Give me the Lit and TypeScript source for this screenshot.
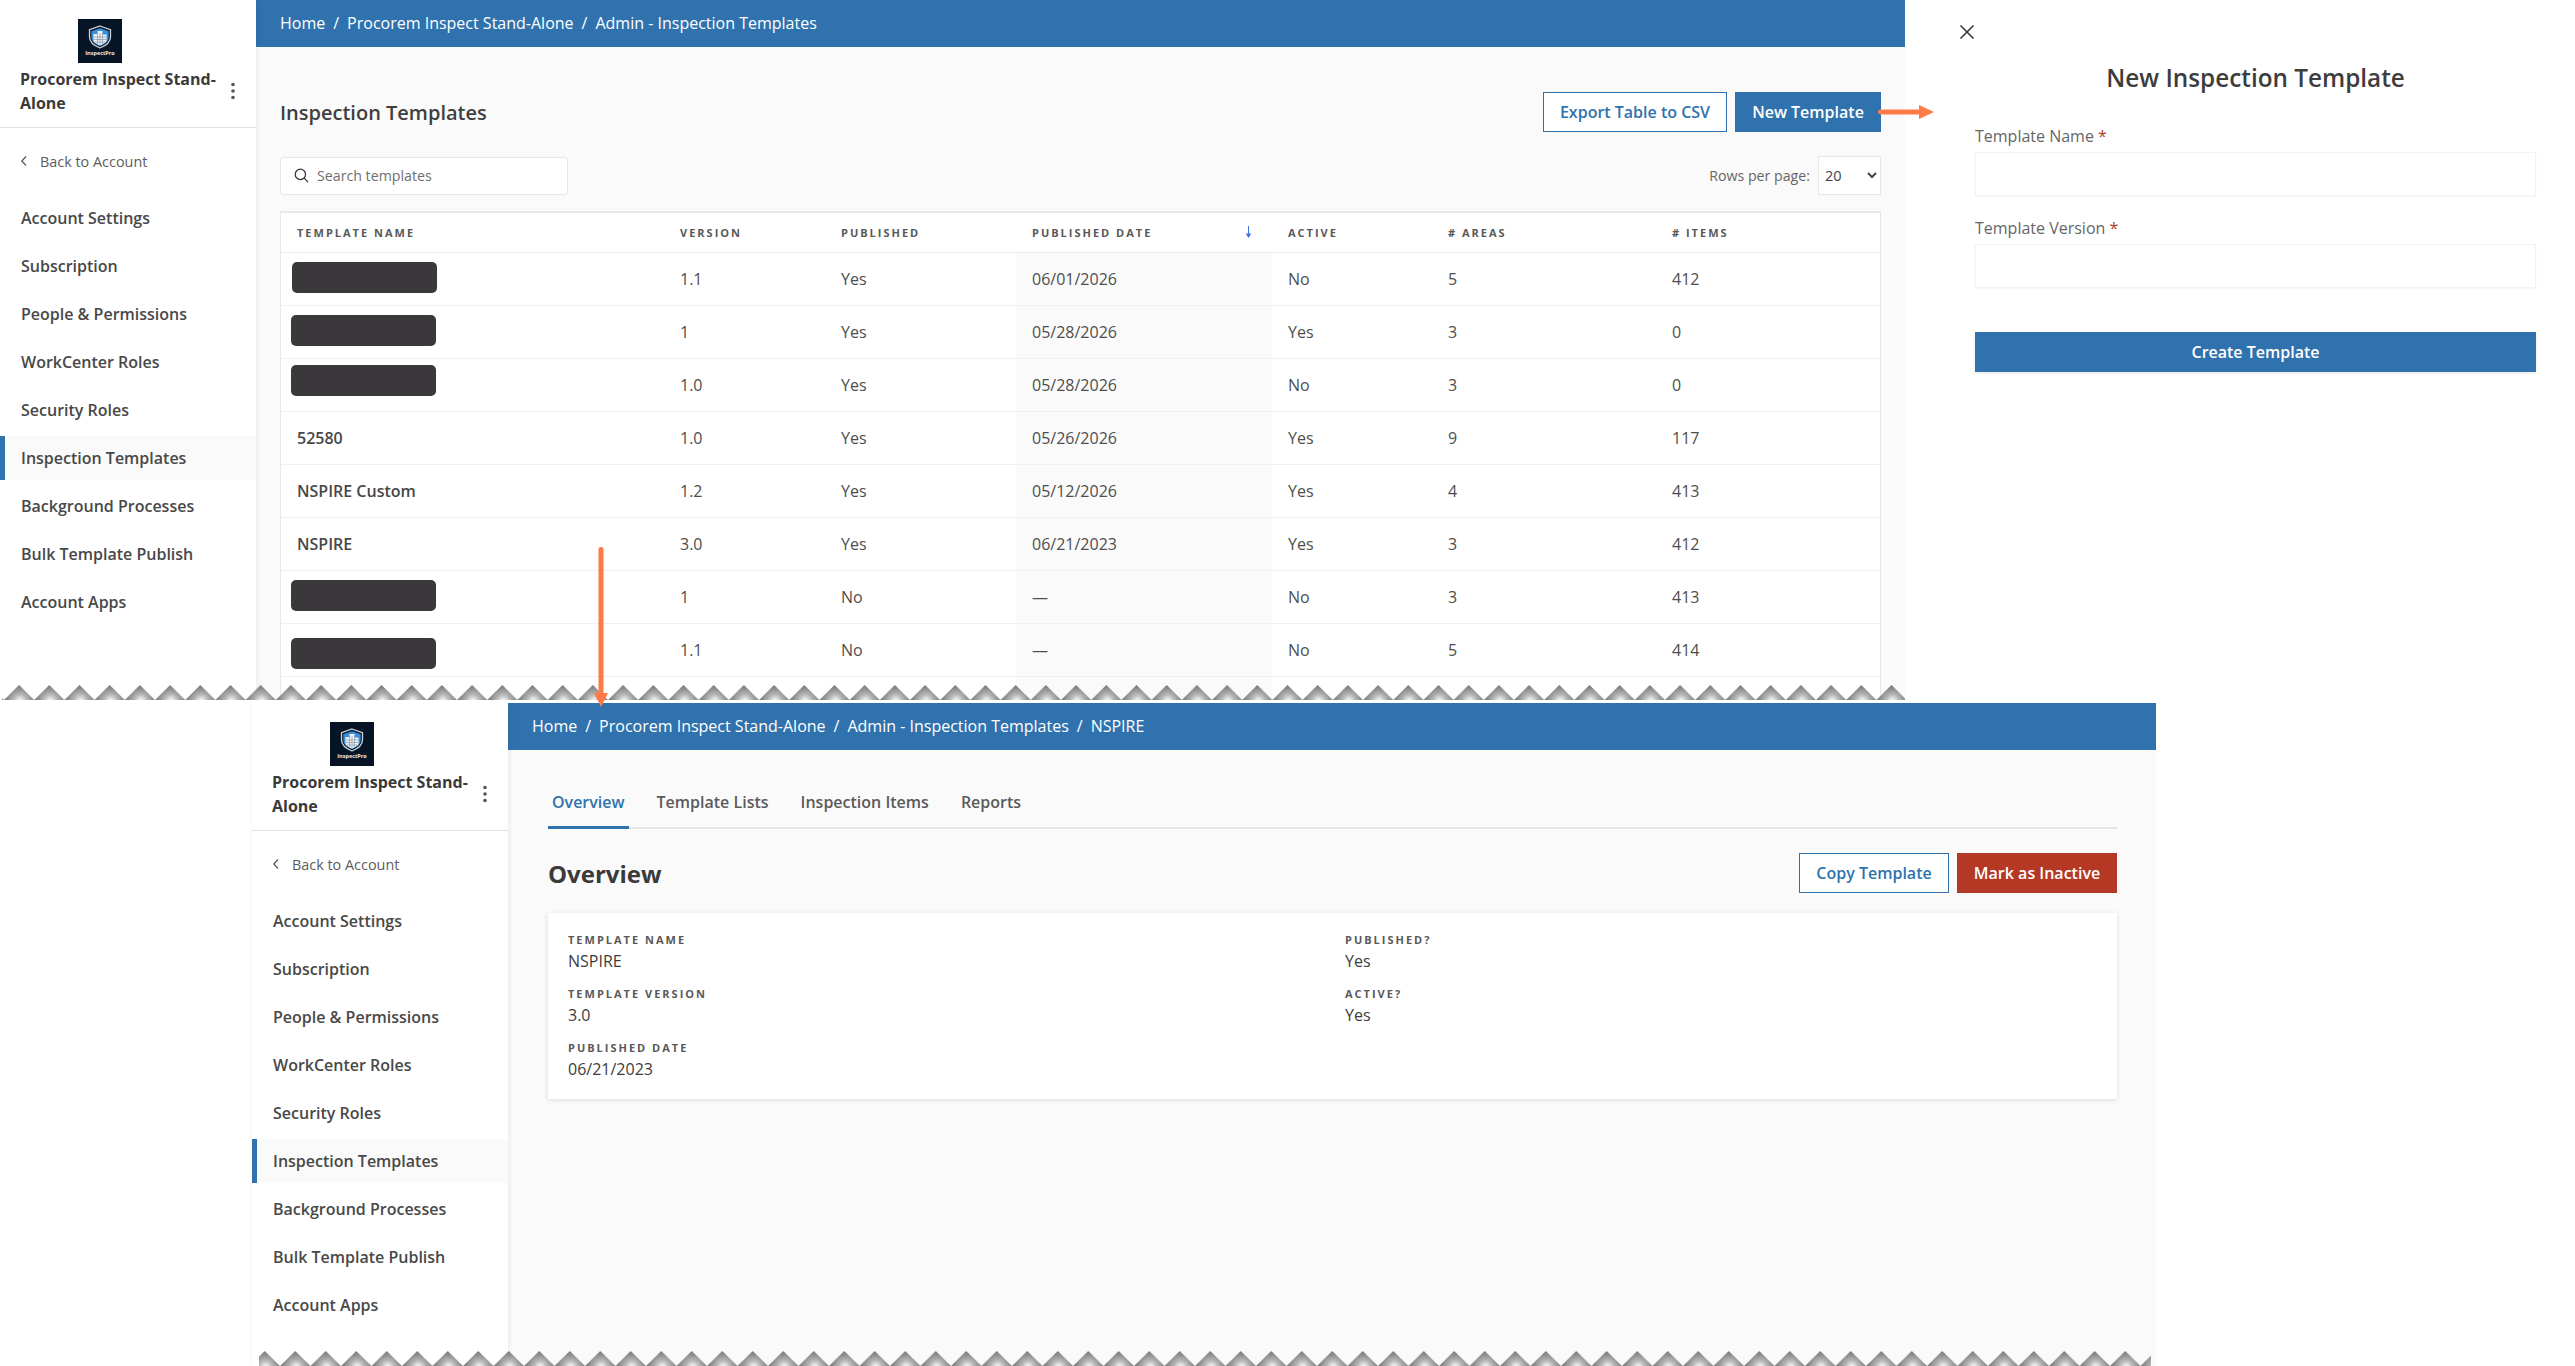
import { LitElement, css, html, svg } from 'lit';
import { customElement, property } from 'lit/decorators.js';

const NAV = [
  'Account Settings',
  'Subscription',
  'People & Permissions',
  'WorkCenter Roles',
  'Security Roles',
  'Inspection Templates',
  'Background Processes',
  'Bulk Template Publish',
  'Account Apps',
];

const COLUMNS = ['Template Name', 'Version', 'Published', 'Published Date', 'Active', '# Areas', '# Items'];

interface TemplateRow {
  name: string;
  // redaction box offset inside the row, null when the name is readable
  mask?: [number, number];
  cells: string[];
}

const ROWS: TemplateRow[] = [
  { name: '', mask: [11, 9], cells: ['1.1', 'Yes', '06/01/2026', 'No', '5', '412'] },
  { name: '', mask: [10, 9], cells: ['1', 'Yes', '05/28/2026', 'Yes', '3', '0'] },
  { name: '', mask: [10, 6], cells: ['1.0', 'Yes', '05/28/2026', 'No', '3', '0'] },
  { name: '52580', cells: ['1.0', 'Yes', '05/26/2026', 'Yes', '9', '117'] },
  { name: 'NSPIRE Custom', cells: ['1.2', 'Yes', '05/12/2026', 'Yes', '4', '413'] },
  { name: 'NSPIRE', cells: ['3.0', 'Yes', '06/21/2023', 'Yes', '3', '412'] },
  { name: '', mask: [10, 9], cells: ['1', 'No', '—', 'No', '3', '413'] },
  { name: '', mask: [10, 14], cells: ['1.1', 'No', '—', 'No', '5', '414'] },
  { name: '', cells: ['', '', '', '', '', ''] },
];

@customElement('app-sidebar')
export class AppSidebar extends LitElement {
  render() {
    return html`
      <div class="head">
        <svg class="logo" viewBox="0 0 44 44" width="44" height="44">
          <rect width="44" height="44" fill="#061426"></rect>
          <path d="M22 7l10.500 3.600V18c0 5.600-4.500 8.600-10.500 11-6-2.400-10.500-5.400-10.500-11v-7.400z" fill="#0c2035" stroke="#ccd3da" stroke-width="1.300"></path>
          <path d="M22 9.300l8.600 3V18c0 4.500-3.600 7-8.600 9-5-2-8.600-4.500-8.600-9v-5.700z" fill="#3c8edb"></path>
          <path d="M15.500 15h4v-3h5v3.500h4V22c-1.500 2-3.700 3.300-6.500 4.400-2.800-1.100-5-2.400-6.500-4.400z" fill="#eef1f4"></path>
          <path d="M19.500 14v11M22 14v12M24.500 14v11M16 18h12M16 20.500h12M17 23h10" stroke="#8a96a3" stroke-width=".7" fill="none"></path>
          <text x="22" y="36" text-anchor="middle" class="logo-text">InspectPro</text>
        </svg>
        <div class="title-row">
          <div class="title">Procorem Inspect Stand-Alone</div>
          <svg class="dots" viewBox="0 0 4 18" width="4" height="18">
            <circle cx="2" cy="2.500" r="1.800"></circle>
            <circle cx="2" cy="9" r="1.800"></circle>
            <circle cx="2" cy="15.500" r="1.800"></circle>
          </svg>
        </div>
      </div>
      <div class="back">
        <svg viewBox="0 0 8 12" width="8" height="12"><path d="M6 1.500L1.800 6 6 10.500" fill="none" stroke="#555" stroke-width="1.200"></path></svg>
        Back to Account
      </div>
      <nav>
        ${NAV.map(
          (item) => html`<div class="item ${item === 'Inspection Templates' ? 'active' : ''}">${item}</div>`,
        )}
      </nav>
    `;
  }

  static styles = css`
    :host {
      display: block;
      flex: 0 0 256px;
      width: 256px;
      background: #fff;
      box-shadow: 1px 0 6px rgba(0, 0, 0, 0.07);
      position: relative;
      z-index: 1;
      font-family: 'Open Sans', sans-serif;
      color: #484848;
    }
    .head {
      padding: 19px 0 12px;
      border-bottom: 1px solid #e3e3e3;
    }
    .logo {
      display: block;
      margin-left: 78px;
    }
    .logo-text {
      font: 700 5.500px 'Open Sans', sans-serif;
      fill: #e8ecf0;
    }
    .title-row {
      display: flex;
      align-items: center;
      margin-top: 4px;
      padding-left: 20px;
    }
    .title {
      width: 204px;
      font-size: 16px;
      font-weight: 700;
      line-height: 24px;
      color: #3a3a3a;
    }
    .dots {
      margin-left: 7px;
      fill: #555;
    }
    .back {
      display: flex;
      align-items: center;
      gap: 12px;
      height: 20px;
      margin: 23px 0 25px 20px;
      font-size: 14.400px;
      color: #5c5c5c;
    }
    nav {
      display: flex;
      flex-direction: column;
      gap: 4px;
    }
    .item {
      display: flex;
      align-items: center;
      height: 44px;
      padding-left: 16px;
      border-left: 5px solid transparent;
      font-size: 16px;
      font-weight: 600;
    }
    .item.active {
      border-left-color: #3072ad;
      background: #fafafa;
    }
  `;
}

@customElement('bread-crumbs')
export class BreadCrumbs extends LitElement {
  @property({ type: Array }) items: string[] = [];

  render() {
    return html`${this.items.map(
      (item, i) => html`${i > 0 ? html`<span class="sep">/</span>` : null}<span>${item}</span>`,
    )}`;
  }

  static styles = css`
    :host {
      display: flex;
      align-items: center;
      flex: 0 0 47px;
      height: 47px;
      padding: 0 0 2px 24px;
      box-sizing: border-box;
      background: #3072ad;
      color: #fff;
      font-family: 'Open Sans', sans-serif;
      font-size: 16px;
      white-space: nowrap;
    }
    .sep {
      margin: 0 8px;
    }
  `;
}

@customElement('torn-edge')
export class TornEdge extends LitElement {
  @property({ type: Number }) period = 30.2;
  @property({ type: Number }) offset = 2;

  render() {
    const p = this.period;
    return html`<svg width="100%" height="15">
      <defs>
        ${svg`<radialGradient id="fade" gradientUnits="userSpaceOnUse" cx="${p / 2 + 1}" cy="16" r="15">
          <stop offset="0" stop-color="#fff"></stop>
          <stop offset=".45" stop-color="#b5b5b5"></stop>
          <stop offset="1" stop-color="#7a7a7a"></stop>
        </radialGradient>
        <pattern id="teeth" patternUnits="userSpaceOnUse" x="${this.offset}" y="0" width="${p}" height="15">
          <path d="M0 15L${p / 2} 0L${p} 15z" fill="url(#fade)"></path>
        </pattern>`}
      </defs>
      <rect width="100%" height="15" fill="url(#teeth)"></rect>
    </svg>`;
  }

  static styles = css`
    :host {
      display: block;
      height: 15px;
      line-height: 0;
    }
    svg {
      display: block;
    }
  `;
}

@customElement('app-root')
export class AppRoot extends LitElement {
  private renderList() {
    return html`
      <main class="list">
        <bread-crumbs .items=${['Home', 'Procorem Inspect Stand-Alone', 'Admin - Inspection Templates']}></bread-crumbs>
        <div class="list-body">
          <div class="list-top">
            <h1>Inspection Templates</h1>
            <div class="actions">
              <button class="btn ghost export">Export Table to CSV</button>
              <button class="btn solid new">New Template</button>
            </div>
          </div>
          <div class="filters">
            <label class="search">
              <svg viewBox="0 0 16 16" width="15" height="15">
                <circle cx="6.800" cy="6.800" r="5.500" fill="none" stroke="#333" stroke-width="1.300"></circle>
                <path d="M10.800 10.800L15 15" stroke="#333" stroke-width="1.300"></path>
              </svg>
              <input placeholder="Search templates" />
            </label>
            <div class="rows-per">
              <span>Rows per page:</span>
              <select><option>20</option></select>
            </div>
          </div>
          <div class="table">
            <div class="row header">
              ${COLUMNS.map(
                (c) => html`<div class="cell">
                  <span>${c}</span>
                  ${c === 'Published Date'
                    ? html`<svg class="sort" viewBox="0 0 7 12" width="7" height="12">
                        <path d="M3.500 0v8" stroke="#3d6fe0" stroke-width="1"></path>
                        <path d="M.8 7.500h5.400L3.500 12z" fill="#3d6fe0"></path>
                      </svg>`
                    : null}
                </div>`,
              )}
            </div>
            ${ROWS.map(
              (r) => html`<div class="row">
                <div class="cell name">${r.name}</div>
                ${r.cells.map((c) => html`<div class="cell">${c}</div>`)}
                ${r.mask
                  ? html`<div class="mask" style="left:${r.mask[0]}px;top:${r.mask[1]}px"></div>`
                  : null}
              </div>`,
            )}
          </div>
        </div>
      </main>
    `;
  }

  private renderDrawer() {
    return html`
      <aside class="drawer">
        <svg class="close" viewBox="0 0 16 14" width="16" height="14">
          <path d="M1.500 .5L14.500 13.500M14.500 .5L1.500 13.500" stroke="#333" stroke-width="1.500"></path>
        </svg>
        <h2>New Inspection Template</h2>
        <label class="field-label first">Template Name <i>*</i></label>
        <input class="field" />
        <label class="field-label">Template Version <i>*</i></label>
        <input class="field" />
        <button class="btn solid create">Create Template</button>
      </aside>
    `;
  }

  private renderDetail() {
    return html`
      <main class="detail">
        <bread-crumbs
          .items=${['Home', 'Procorem Inspect Stand-Alone', 'Admin - Inspection Templates', 'NSPIRE']}
        ></bread-crumbs>
        <div class="detail-body">
          <div class="tabs">
            <div class="tab active">Overview</div>
            <div class="tab">Template Lists</div>
            <div class="tab">Inspection Items</div>
            <div class="tab">Reports</div>
          </div>
          <div class="detail-top">
            <h1 class="overview">Overview</h1>
            <div class="actions">
              <button class="btn ghost copy">Copy Template</button>
              <button class="btn danger">Mark as Inactive</button>
            </div>
          </div>
          <div class="card">
            <div class="col">
              ${this.renderField('Template Name', 'NSPIRE')}
              ${this.renderField('Template Version', '3.0')}
              ${this.renderField('Published Date', '06/21/2023')}
            </div>
            <div class="col">
              ${this.renderField('Published?', 'Yes')}
              ${this.renderField('Active?', 'Yes')}
            </div>
          </div>
        </div>
      </main>
    `;
  }

  private renderField(label: string, value: string) {
    return html`<div class="kv">
      <div class="k">${label}</div>
      <div class="v">${value}</div>
    </div>`;
  }

  render() {
    return html`
      <section class="band top">
        <app-sidebar></app-sidebar>
        ${this.renderList()} ${this.renderDrawer()}
        <torn-edge class="tear-top" period="30.2" offset="2"></torn-edge>
      </section>
      <section class="band bottom">
        <app-sidebar></app-sidebar>
        ${this.renderDetail()}
        <torn-edge class="tear-bottom" period="30.5" offset="-9.500"></torn-edge>
      </section>
      <svg class="callout right" viewBox="0 0 56 14" width="56" height="14">
        <path d="M2.500 4.500H41V0l15 7-15 7V9.500H2.500a2.500 2.500 0 010-5z" fill="#ff7a47"></path>
      </svg>
      <svg class="callout down" viewBox="0 0 14 160" width="14" height="160">
        <path d="M4.500 2a2.500 2 0 015 0V146H14l-7 14-7-14h4.500z" fill="#ff7a47"></path>
      </svg>
    `;
  }

  static styles = css`
    :host {
      display: block;
      position: relative;
      width: 2575px;
      height: 1366px;
      overflow: hidden;
      background: #fff;
      font-family: 'Open Sans', sans-serif;
      color: #4a4a4a;
    }
    * {
      box-sizing: border-box;
    }
    .band {
      display: flex;
      position: relative;
      overflow: hidden;
    }
    .band.top {
      height: 700px;
      margin-bottom: 3px;
    }
    .band.bottom {
      height: 663px;
      width: 2156px;
      padding-left: 252px;
    }
    torn-edge {
      position: absolute;
      bottom: 0;
      z-index: 2;
    }
    .tear-top {
      left: 2px;
      width: 1903px;
    }
    .tear-bottom {
      left: 259px;
      width: 1892px;
    }
    main {
      display: flex;
      flex-direction: column;
      background: #fafafa;
    }
    .list {
      flex: 0 0 1649px;
    }
    .list-body {
      padding: 45px 24px 0;
    }
    .list-top,
    .detail-top {
      display: flex;
      align-items: center;
      justify-content: space-between;
    }
    h1 {
      margin: 0;
      font-size: 20px;
      font-weight: 600;
      color: #3f3f3f;
    }
    .actions {
      display: flex;
      gap: 8px;
    }
    .btn {
      height: 40px;
      border: 1px solid #3072ad;
      border-radius: 0;
      font-family: inherit;
      font-size: 16px;
      font-weight: 600;
      padding: 0;
    }
    .ghost {
      background: #fff;
      color: #3072ad;
    }
    .solid {
      background: #3072ad;
      color: #fff;
    }
    .danger {
      width: 160px;
      background: #b53825;
      border-color: #b53825;
      color: #fff;
    }
    .export {
      width: 184px;
    }
    .new {
      width: 146px;
    }
    .copy {
      width: 150px;
    }
    .filters {
      display: flex;
      align-items: center;
      justify-content: space-between;
      margin-top: 24px;
      height: 39px;
    }
    .search {
      display: flex;
      align-items: center;
      gap: 8px;
      width: 288px;
      height: 38px;
      padding-left: 13px;
      background: #fff;
      border: 1px solid #e6e6e6;
      border-radius: 3px;
    }
    .search input {
      flex: 1;
      min-width: 0;
      border: 0;
      outline: 0;
      padding: 0;
      font: 14.200px 'Open Sans', sans-serif;
    }
    .search input::placeholder {
      color: #6f6f6f;
      opacity: 1;
    }
    .rows-per {
      display: flex;
      align-items: center;
      gap: 8px;
      font-size: 14.200px;
      color: #666;
    }
    select {
      width: 63px;
      height: 39px;
      padding-left: 2px;
      background: #fff;
      border: 1px solid #e6e6e6;
      border-radius: 0;
      font: 14.500px 'Open Sans', sans-serif;
      color: #444;
    }
    .table {
      margin-top: 16px;
      background: #fff;
      border: solid #e8e8e8;
      border-width: 2px 1px 0;
    }
    .row {
      position: relative;
      display: grid;
      grid-template-columns: 383px 161px 191px 256px 160px 224px 1fr;
      height: 53px;
      border-bottom: 1px solid #f0f0f0;
    }
    .row.header {
      height: 40px;
      border-bottom-color: #ececec;
    }
    .cell {
      display: flex;
      align-items: center;
      padding-left: 16px;
      font-size: 16px;
      color: #4e4e4e;
    }
    .row:not(.header) .cell:nth-child(4) {
      background: #fafafa;
    }
    .cell.name {
      color: #474747;
      font-weight: 600;
    }
    .header .cell {
      font-size: 11px;
      font-weight: 700;
      letter-spacing: 2px;
      text-transform: uppercase;
      color: #595959;
    }
    .sort {
      margin-left: auto;
      margin-right: 20px;
      position: relative;
      top: -1px;
    }
    .mask {
      position: absolute;
      width: 145px;
      height: 31px;
      border-radius: 5px;
      background: #3a383b;
    }
    .drawer {
      flex: 1;
      display: flex;
      flex-direction: column;
      padding: 25px 39px 0 70px;
      background: #fff;
    }
    .close {
      display: block;
      margin-left: -16px;
    }
    h2 {
      margin: 24px 0 0;
      height: 30px;
      line-height: 30px;
      text-align: center;
      font-size: 24.300px;
      font-weight: 600;
      color: #3d3d3d;
    }
    .field-label {
      height: 20px;
      margin-top: 22px;
      line-height: 20px;
      font-size: 16px;
      color: #666;
    }
    .field-label.first {
      margin-top: 33px;
    }
    .field-label i {
      font-style: normal;
      color: #b03a2e;
    }
    .field {
      height: 44px;
      margin-top: 6px;
      background: #fff;
      border: 1px solid #f3f3f3;
      box-shadow: 0 1px 2px rgba(0, 0, 0, 0.04);
      outline: 0;
    }
    .create {
      width: 100%;
      margin-top: 44px;
      box-shadow: 0 1px 3px rgba(0, 0, 0, 0.1);
    }
    .detail {
      flex: 1;
    }
    .detail-body {
      padding: 0 39px 0 40px;
    }
    .tabs {
      display: flex;
      gap: 24px;
      height: 79px;
      padding-top: 31px;
      border-bottom: 2px solid #e6e6e6;
    }
    .tab {
      height: 48px;
      padding: 9px 4px 0;
      font-size: 16px;
      font-weight: 600;
      line-height: 24px;
      color: #5a5a5a;
    }
    .tab.active {
      color: #3072ad;
      border-bottom: 3px solid #3072ad;
    }
    .detail-top {
      margin-top: 24px;
    }
    .overview {
      font-size: 24px;
      font-weight: 700;
      color: #3a3a3a;
    }
    .card {
      display: grid;
      grid-template-columns: 777px 1fr;
      height: 186px;
      margin-top: 20px;
      padding: 18px 20px;
      background: #fff;
      box-shadow: 0 1px 5px rgba(0, 0, 0, 0.12);
    }
    .col {
      display: flex;
      flex-direction: column;
      gap: 8px;
    }
    .kv {
      height: 46px;
    }
    .k {
      height: 18px;
      line-height: 18px;
      font-size: 11px;
      font-weight: 700;
      letter-spacing: 2px;
      text-transform: uppercase;
      color: #595959;
    }
    .v {
      line-height: 24px;
      font-size: 16px;
      color: #3c3c3c;
    }
    .callout {
      position: absolute;
      z-index: 3;
    }
    .callout.right {
      left: 1878px;
      top: 105px;
    }
    .callout.down {
      left: 594px;
      top: 547px;
    }
  `;
}

declare global {
  interface HTMLElementTagNameMap {
    'app-root': AppRoot;
    'app-sidebar': AppSidebar;
    'bread-crumbs': BreadCrumbs;
    'torn-edge': TornEdge;
  }
}
